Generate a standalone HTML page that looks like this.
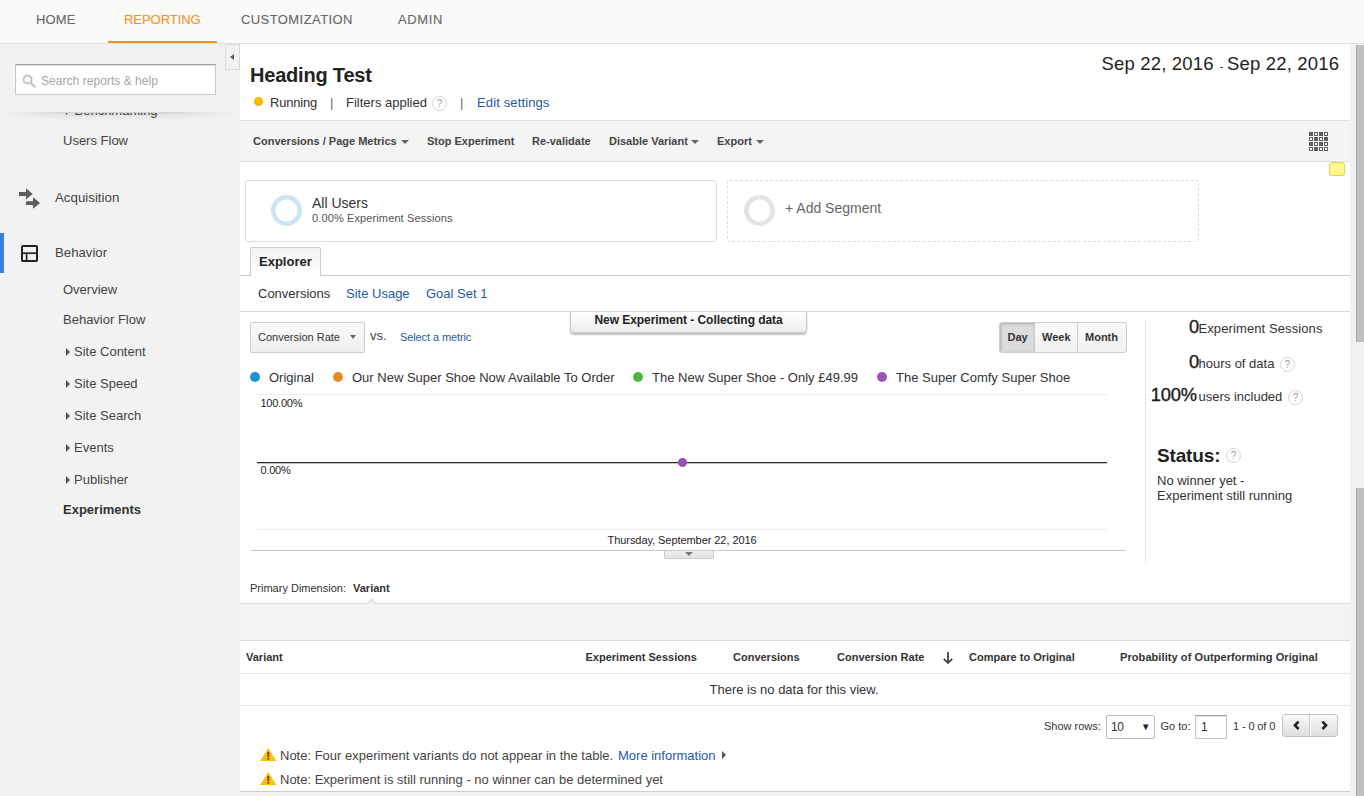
<!DOCTYPE html>
<html><head><meta charset="utf-8"><style>
*{box-sizing:border-box;margin:0;padding:0}
html,body{width:1364px;height:796px;overflow:hidden;background:#f2f2f2;font-family:"Liberation Sans",sans-serif;color:#333;position:relative}
.box{position:absolute}
.t{position:absolute;white-space:nowrap;line-height:1}
.tri-r{position:absolute;width:0;height:0;border-top:4px solid transparent;border-bottom:4px solid transparent;border-left:4px solid #555}
.dd{position:absolute;width:0;height:0;border-left:4px solid transparent;border-right:4px solid transparent;border-top:4px solid #666}
.q{position:absolute;width:15px;height:15px;border-radius:50%;border:1px solid #d4d4d4;color:#9a9a9a;font-size:10px;line-height:13px;text-align:center}
.q::after{content:"?"}
</style></head><body>
<div class="box" style="left:0;top:0;width:1364px;height:43px;background:#fafafa"></div>
<div class="box" style="left:0;top:43px;width:1364px;height:1px;background:#dedede"></div>
<div class="t" style="left:36px;top:12.5px;font-size:13px;font-weight:normal;color:#686868;letter-spacing:0.15px;-webkit-text-stroke:0.12px">HOME</div>

<div class="t" style="left:124px;top:12.5px;font-size:13px;font-weight:normal;color:#f7921e;letter-spacing:-0.05px;-webkit-text-stroke:0.12px">REPORTING</div>

<div class="t" style="left:241px;top:12.5px;font-size:13px;font-weight:normal;color:#686868;letter-spacing:0.42px;-webkit-text-stroke:0.12px">CUSTOMIZATION</div>

<div class="t" style="left:398px;top:12.5px;font-size:13px;font-weight:normal;color:#686868;letter-spacing:0.6px;-webkit-text-stroke:0.12px">ADMIN</div>

<div class="box" style="left:108px;top:41px;width:109px;height:2px;background:#f7921e"></div>
<div class="box" style="left:0;top:44px;width:240px;height:752px;background:#f2f2f2"></div>
<div class="t" style="left:74.5px;top:104.0px;font-size:13px;font-weight:normal;color:#444;">Benchmarking</div>

<div class="tri-r" style="left:66px;top:107px"></div>
<div class="box" style="left:0;top:44px;width:225px;height:69px;background:#f2f2f2"></div>
<div class="box" style="left:0;top:112px;width:236px;height:9px;background:linear-gradient(rgba(0,0,0,0.13),rgba(0,0,0,0.07) 25%,rgba(0,0,0,0.02) 70%,rgba(0,0,0,0));-webkit-mask-image:linear-gradient(90deg,transparent,#000 28%,#000 72%,transparent)"></div>
<div class="box" style="left:15px;top:64px;width:201px;height:31px;background:#fff;border:1px solid #c8c8c8;border-top-color:#a0a0a0;box-shadow:inset 0 1px 1px rgba(0,0,0,0.12)"></div>
<svg class="box" style="left:22px;top:74px" width="14" height="14" viewBox="0 0 14 14"><circle cx="5.5" cy="5.5" r="4" fill="none" stroke="#c4c4c4" stroke-width="2"/><line x1="8.5" y1="8.5" x2="12.5" y2="12.5" stroke="#c4c4c4" stroke-width="2.4" stroke-linecap="round"/></svg>
<div class="t" style="left:41px;top:74.8px;font-size:12.1px;font-weight:normal;color:#a6a6a6;">Search reports &amp; help</div>

<div class="box" style="left:225px;top:44px;width:15px;height:26px;background:#f2f2f2;border:1px solid #dadada"></div>
<div class="box" style="left:230px;top:54px;width:0;height:0;border-top:3.5px solid transparent;border-bottom:3.5px solid transparent;border-right:4.2px solid #5f5a60"></div>
<div class="t" style="left:63px;top:134.0px;font-size:13px;font-weight:normal;color:#444;">Users Flow</div>

<svg class="box" style="left:18px;top:186px" width="24" height="24" viewBox="0 0 24 24"><g fill="#5f5a60"><rect x="1" y="6" width="8" height="4"/><path d="M8 2.2L14.6 8 8 13.6z"/><rect x="8" y="15.2" width="8" height="3.8"/><path d="M15 11.2L22 17 15 22.8z"/></g></svg>
<div class="t" style="left:55px;top:190.7px;font-size:13.3px;font-weight:normal;color:#444;">Acquisition</div>

<div class="box" style="left:0;top:233px;width:4px;height:40px;background:#3b7ddd"></div>
<svg class="box" style="left:20px;top:244px" width="20" height="20" viewBox="0 0 20 20"><rect x="2" y="2" width="15" height="15" rx="0.8" fill="none" stroke="#222" stroke-width="2"/><path d="M3 9.2H16" stroke="#222" stroke-width="1.7"/><path d="M6.6 10V16" stroke="#222" stroke-width="1.7"/></svg>
<div class="t" style="left:55px;top:245.8px;font-size:13.2px;font-weight:normal;color:#444;">Behavior</div>

<div class="t" style="left:63px;top:282.8px;font-size:13px;font-weight:normal;color:#444;">Overview</div>

<div class="t" style="left:63px;top:312.8px;font-size:13px;font-weight:normal;color:#444;">Behavior Flow</div>

<div class="tri-r" style="left:66px;top:348px"></div>
<div class="t" style="left:74px;top:344.8px;font-size:13px;font-weight:normal;color:#444;">Site Content</div>

<div class="tri-r" style="left:66px;top:380px"></div>
<div class="t" style="left:74px;top:376.8px;font-size:13px;font-weight:normal;color:#444;">Site Speed</div>

<div class="tri-r" style="left:66px;top:412px"></div>
<div class="t" style="left:74px;top:408.8px;font-size:13px;font-weight:normal;color:#444;">Site Search</div>

<div class="tri-r" style="left:66px;top:444px"></div>
<div class="t" style="left:74px;top:440.8px;font-size:13px;font-weight:normal;color:#444;">Events</div>

<div class="tri-r" style="left:66px;top:476px"></div>
<div class="t" style="left:74px;top:472.8px;font-size:13px;font-weight:normal;color:#444;">Publisher</div>

<div class="t" style="left:63px;top:502.8px;font-size:13px;font-weight:bold;color:#333;">Experiments</div>

<div class="box" style="left:240px;top:44px;width:1110px;height:747px;background:#fff"></div>
<div class="box" style="left:240px;top:791px;width:1110px;height:1px;background:#cdcdcd"></div>
<div class="t" style="left:250px;top:65.1px;font-size:20px;font-weight:bold;color:#222;letter-spacing:-0.2px">Heading Test</div>

<div class="box" style="left:254px;top:97px;width:9px;height:9px;border-radius:50%;background:radial-gradient(circle at 50% 40%,#ffc800,#f0a000)"></div>
<div class="t" style="left:270px;top:96.0px;font-size:13px;font-weight:normal;color:#333;letter-spacing:-0.2px">Running</div>

<div class="t" style="left:330px;top:96.0px;font-size:13px;font-weight:normal;color:#666;">|</div>

<div class="t" style="left:346px;top:96.0px;font-size:13px;font-weight:normal;color:#333;">Filters applied</div>

<div class="q" style="left:432px;top:96px"></div>
<div class="t" style="left:460px;top:96.0px;font-size:13px;font-weight:normal;color:#666;">|</div>

<div class="t" style="left:477px;top:96.0px;font-size:13px;font-weight:normal;color:#1d5aa5;letter-spacing:0.13px">Edit settings</div>

<div class="t" style="left:1101.5px;top:55.3px;font-size:18.5px;font-weight:normal;color:#222;letter-spacing:0.18px">Sep 22, 2016</div>

<div class="box" style="left:1219.5px;top:66.6px;width:3px;height:1.2px;background:#444"></div>
<div class="t" style="left:1227px;top:55.3px;font-size:18.5px;font-weight:normal;color:#222;letter-spacing:0.18px">Sep 22, 2016</div>

<div class="box" style="left:240px;top:120px;width:1110px;height:42px;background:#f4f4f4;border-top:1px solid #e2e2e2;border-bottom:1px solid #e2e2e2"></div>
<div class="t" style="left:253px;top:135.7px;font-size:11px;font-weight:bold;color:#444;">Conversions / Page Metrics</div>

<div class="dd" style="left:400.5px;top:140px"></div>
<div class="t" style="left:427px;top:135.7px;font-size:11px;font-weight:bold;color:#444;">Stop Experiment</div>

<div class="t" style="left:532px;top:135.7px;font-size:11px;font-weight:bold;color:#444;">Re-validate</div>

<div class="t" style="left:609px;top:135.7px;font-size:11px;font-weight:bold;color:#444;">Disable Variant</div>

<div class="dd" style="left:691px;top:140px"></div>
<div class="t" style="left:717px;top:135.7px;font-size:11px;font-weight:bold;color:#444;">Export</div>

<div class="dd" style="left:756px;top:140px"></div>
<svg class="box" style="left:1309px;top:132px" width="20" height="20" viewBox="0 0 20 20"><rect x="0" y="0" width="4" height="4" fill="#5f5a60"/><rect x="5.5" y="0.5" width="3" height="3" fill="#fff" stroke="#5f5a60" stroke-width="1"/><rect x="10" y="0" width="4" height="4" fill="#5f5a60"/><rect x="15.5" y="0.5" width="3" height="3" fill="#fff" stroke="#5f5a60" stroke-width="1"/><rect x="0.5" y="5.5" width="3" height="3" fill="#fff" stroke="#5f5a60" stroke-width="1"/><rect x="5" y="5" width="4" height="4" fill="#5f5a60"/><rect x="10.5" y="5.5" width="3" height="3" fill="#fff" stroke="#5f5a60" stroke-width="1"/><rect x="15" y="5" width="4" height="4" fill="#5f5a60"/><rect x="0" y="10" width="4" height="4" fill="#5f5a60"/><rect x="5.5" y="10.5" width="3" height="3" fill="#fff" stroke="#5f5a60" stroke-width="1"/><rect x="10" y="10" width="4" height="4" fill="#5f5a60"/><rect x="15.5" y="10.5" width="3" height="3" fill="#fff" stroke="#5f5a60" stroke-width="1"/><rect x="0.5" y="15.5" width="3" height="3" fill="#fff" stroke="#5f5a60" stroke-width="1"/><rect x="5" y="15" width="4" height="4" fill="#5f5a60"/><rect x="10.5" y="15.5" width="3" height="3" fill="#fff" stroke="#5f5a60" stroke-width="1"/><rect x="15.5" y="15.5" width="3" height="3" fill="#fff" stroke="#5f5a60" stroke-width="1"/></svg>
<div class="box" style="left:1329px;top:162px;width:16px;height:14px;background:#fff88f;border:1px solid #e6d24a;border-radius:3px"></div>
<div class="box" style="left:245px;top:180px;width:472px;height:62px;border:1px solid #ddd;border-radius:3px"></div>
<svg class="box" style="left:270px;top:194px" width="33" height="33" viewBox="0 0 33 33"><circle cx="16.5" cy="16.5" r="13.2" fill="none" stroke="#cbe5f4" stroke-width="4.6" stroke-dasharray="81.9 1" transform="rotate(-88 16.5 16.5)"/></svg>
<div class="t" style="left:312px;top:196.1px;font-size:14px;font-weight:normal;color:#333;">All Users</div>

<div class="t" style="left:312px;top:212.7px;font-size:11px;font-weight:normal;color:#555;letter-spacing:0.12px">0.00% Experiment Sessions</div>

<div class="box" style="left:727px;top:180px;width:472px;height:62px;border:1px dashed #ddd;border-radius:3px"></div>
<svg class="box" style="left:743px;top:194px" width="33" height="33" viewBox="0 0 33 33"><circle cx="16.5" cy="16.5" r="13.2" fill="none" stroke="#e3e3e3" stroke-width="4.6" stroke-dasharray="81.9 1" transform="rotate(-88 16.5 16.5)"/></svg>
<div class="t" style="left:785px;top:201.1px;font-size:14px;font-weight:normal;color:#666;">+ Add Segment</div>

<div class="box" style="left:240px;top:275px;width:1110px;height:1px;background:#ccc"></div>
<div class="box" style="left:250px;top:247px;width:71px;height:29px;border:1px solid #ccc;border-bottom:none;border-radius:2px 2px 0 0;background:linear-gradient(#f2f2f2,#fff)"></div>
<div class="t" style="left:259px;top:255.0px;font-size:13px;font-weight:bold;color:#222;">Explorer</div>

<div class="t" style="left:258px;top:287.0px;font-size:13px;font-weight:normal;color:#333;">Conversions</div>

<div class="t" style="left:346px;top:287.0px;font-size:13px;font-weight:normal;color:#1d5aa5;">Site Usage</div>

<div class="t" style="left:426px;top:287.0px;font-size:13px;font-weight:normal;color:#1d5aa5;">Goal Set 1</div>

<div class="box" style="left:240px;top:311px;width:1110px;height:1px;background:#d8d8d8"></div>
<div class="box" style="left:250px;top:322px;width:115px;height:31px;border:1px solid #ccc;border-radius:2px;background:linear-gradient(#fafafa,#efefef)"></div>
<div class="t" style="left:258px;top:331.7px;font-size:11px;font-weight:normal;color:#333;">Conversion Rate</div>

<div class="dd" style="left:350px;top:335px;border-width:4px 3.5px 0 3.5px"></div>
<div class="t" style="left:370px;top:329.0px;font-size:13px;font-weight:normal;color:#444;">vs.</div>

<div class="t" style="left:400px;top:331.7px;font-size:11px;font-weight:normal;color:#1d5aa5;letter-spacing:-0.1px">Select a metric</div>

<div class="box" style="left:570px;top:312px;width:237px;height:20.5px;border:1px solid #c8c8c8;border-top:none;border-radius:0 0 4px 4px;background:linear-gradient(#fff,#ececec);box-shadow:0 2px 2px rgba(0,0,0,0.25)"></div>
<div class="t" style="left:594.5px;top:313.8px;font-size:12px;font-weight:bold;color:#222;letter-spacing:-0.06px">New Experiment - Collecting data</div>

<div class="box" style="left:999px;top:322px;width:128px;height:31px;border:1px solid #ccc;border-radius:3px;background:linear-gradient(#fafafa,#f0f0f0);overflow:hidden"><div class="box" style="left:0;top:0;width:34px;height:29px;background:#dcdcdc;box-shadow:inset 1px 1px 3px rgba(0,0,0,0.22)"></div><div class="box" style="left:34px;top:0;width:1px;height:29px;background:#ccc"></div><div class="box" style="left:77px;top:0;width:1px;height:29px;background:#ccc"></div></div>
<div class="t" style="left:1007.5px;top:331.7px;font-size:11px;font-weight:bold;color:#333;">Day</div>

<div class="t" style="left:1042px;top:331.7px;font-size:11px;font-weight:bold;color:#333;">Week</div>

<div class="t" style="left:1085px;top:331.7px;font-size:11px;font-weight:bold;color:#333;">Month</div>

<div class="box" style="left:250px;top:372px;width:10px;height:10px;border-radius:50%;background:#1e90d6"></div>
<div class="t" style="left:269px;top:371.0px;font-size:13px;font-weight:normal;color:#333;">Original</div>

<div class="box" style="left:333px;top:372px;width:10px;height:10px;border-radius:50%;background:#df8c22"></div>
<div class="t" style="left:352px;top:371.0px;font-size:13px;font-weight:normal;color:#333;">Our New Super Shoe Now Available To Order</div>

<div class="box" style="left:633px;top:372px;width:10px;height:10px;border-radius:50%;background:#4db53e"></div>
<div class="t" style="left:652px;top:371.0px;font-size:13px;font-weight:normal;color:#333;">The New Super Shoe - Only £49.99</div>

<div class="box" style="left:877px;top:372px;width:10px;height:10px;border-radius:50%;background:#a152b8"></div>
<div class="t" style="left:896px;top:371.0px;font-size:13px;font-weight:normal;color:#333;">The Super Comfy Super Shoe</div>

<div class="box" style="left:257px;top:394px;width:850px;height:1px;background:#ececec"></div>
<div class="t" style="left:260.5px;top:397.7px;font-size:11px;font-weight:normal;color:#222;letter-spacing:-0.25px">100.00%</div>

<div class="box" style="left:257px;top:462px;width:850px;height:1px;background:#2a2a2a;box-shadow:0 0.6px 0 rgba(40,40,40,0.45)"></div>
<div class="t" style="left:260.5px;top:464.7px;font-size:11px;font-weight:normal;color:#222;letter-spacing:-0.25px">0.00%</div>

<div class="box" style="left:677.5px;top:457.5px;width:9px;height:9px;border-radius:50%;background:#9b50b5"></div>
<div class="box" style="left:257px;top:529px;width:850px;height:1px;background:#ececec"></div>
<div class="t" style="left:607.5px;top:534.7px;font-size:11px;font-weight:normal;color:#222;letter-spacing:-0.06px">Thursday, September 22, 2016</div>

<div class="box" style="left:251px;top:550px;width:875px;height:1px;background:#c8c8c8"></div>
<div class="box" style="left:664px;top:551px;width:50px;height:8px;border:1px solid #ccc;border-top:none;border-radius:0 0 2px 2px;background:linear-gradient(#eee,#e2e2e2)"></div>
<div class="box" style="left:685px;top:552px;width:0;height:0;border-left:4px solid transparent;border-right:4px solid transparent;border-top:4px solid #777"></div>
<div class="box" style="left:1145px;top:321px;width:0;height:241px;border-left:1px dotted #ccc"></div>
<div class="t" style="left:1189px;top:318.0px;font-size:18.3px;font-weight:normal;color:#1a1a1a;-webkit-text-stroke:0.35px">0</div>

<div class="t" style="left:1198.5px;top:322.0px;font-size:13px;font-weight:normal;color:#333;letter-spacing:0.1px">Experiment Sessions</div>

<div class="t" style="left:1189px;top:352.5px;font-size:18.3px;font-weight:normal;color:#1a1a1a;-webkit-text-stroke:0.35px">0</div>

<div class="t" style="left:1198.5px;top:357.0px;font-size:13px;font-weight:normal;color:#333;">hours of data</div>

<div class="q" style="left:1280px;top:357px"></div>
<div class="t" style="left:1150.8px;top:385.5px;font-size:18.3px;font-weight:normal;color:#1a1a1a;-webkit-text-stroke:0.35px;letter-spacing:-0.2px">100%</div>

<div class="t" style="left:1198.5px;top:390.0px;font-size:13px;font-weight:normal;color:#333;">users included</div>

<div class="q" style="left:1288px;top:390px"></div>
<div class="t" style="left:1157px;top:445.9px;font-size:19px;font-weight:bold;color:#222;letter-spacing:-0.15px">Status:</div>

<div class="q" style="left:1226px;top:448px"></div>
<div class="t" style="left:1157px;top:474.0px;font-size:13px;font-weight:normal;color:#333;">No winner yet -</div>

<div class="t" style="left:1157px;top:489.0px;font-size:13px;font-weight:normal;color:#333;">Experiment still running</div>

<div class="t" style="left:250px;top:582.7px;font-size:11px;font-weight:normal;color:#333;">Primary Dimension:</div>

<div class="t" style="left:353px;top:582.7px;font-size:11px;font-weight:bold;color:#333;">Variant</div>

<div class="box" style="left:240px;top:603px;width:1110px;height:38px;background:#f3f3f3;border-top:1px solid #ddd;border-bottom:1px solid #ddd"></div>
<div class="box" style="left:368px;top:599.5px;width:7px;height:7px;background:#f3f3f3;border-left:1px solid #d4d4d4;border-top:1px solid #d4d4d4;transform:rotate(45deg)"></div>
<div class="t" style="left:246px;top:651.7px;font-size:11px;font-weight:bold;color:#333;">Variant</div>

<div class="t" style="left:585.5px;top:651.7px;font-size:11px;font-weight:bold;color:#333;">Experiment Sessions</div>

<div class="t" style="left:733px;top:651.7px;font-size:11px;font-weight:bold;color:#333;">Conversions</div>

<div class="t" style="left:837px;top:651.7px;font-size:11px;font-weight:bold;color:#333;">Conversion Rate</div>

<svg class="box" style="left:942px;top:651px" width="12" height="14" viewBox="0 0 12 14"><path d="M6 1v11M1.8 7.8L6 12l4.2-4.2" stroke="#444" stroke-width="1.8" fill="none"/></svg>
<div class="t" style="left:969px;top:651.7px;font-size:11px;font-weight:bold;color:#333;">Compare to Original</div>

<div class="t" style="left:1120px;top:651.7px;font-size:11px;font-weight:bold;color:#333;letter-spacing:0.08px">Probability of Outperforming Original</div>

<div class="box" style="left:240px;top:673px;width:1110px;height:1px;background:#e2e2e2"></div>
<div class="t" style="left:709.5px;top:682.5px;font-size:13px;font-weight:normal;color:#333;">There is no data for this view.</div>

<div class="box" style="left:240px;top:705px;width:1110px;height:1px;background:#e2e2e2"></div>
<div class="t" style="left:1044px;top:720.7px;font-size:11px;font-weight:normal;color:#333;">Show rows:</div>

<div class="box" style="left:1106px;top:715px;width:49px;height:24px;border:1px solid #bbb;border-radius:2px;background:#fff"></div>
<div class="t" style="left:1111px;top:720.8px;font-size:12px;font-weight:normal;color:#333;letter-spacing:-0.4px">10</div>

<div class="t" style="left:1141px;top:721.5px;font-size:9.5px;font-weight:normal;color:#222;">&#9660;</div>

<div class="t" style="left:1160.5px;top:720.7px;font-size:11px;font-weight:normal;color:#333;">Go to:</div>

<div class="box" style="left:1195px;top:715px;width:32px;height:24px;border:1px solid #c4c4c4;border-top-color:#a0a0a0;background:#fff;box-shadow:inset 0 1px 1px rgba(0,0,0,0.1)"></div>
<div class="t" style="left:1201px;top:720.8px;font-size:12px;font-weight:normal;color:#333;letter-spacing:-0.3px">1</div>

<div class="t" style="left:1233px;top:720.7px;font-size:11px;font-weight:normal;color:#333;letter-spacing:-0.12px">1 - 0 of 0</div>

<div class="box" style="left:1282px;top:714px;width:56px;height:23px;border:1px solid #c4c4c4;border-radius:3px;background:linear-gradient(#fbfbfb,#e9e9e9 55%,#dedede)"></div>
<div class="box" style="left:1309px;top:715px;width:1px;height:21px;background:#c8c8c8;box-shadow:1px 0 0 #fff"></div>
<svg class="box" style="left:1291px;top:719px" width="40" height="13" viewBox="0 0 40 13"><path d="M7.6 2.6L3.9 6.3 7.6 10" stroke="#1e1e1e" stroke-width="2.5" fill="none"/><path d="M31.4 2.6l3.7 3.7-3.7 3.7" stroke="#1e1e1e" stroke-width="2.5" fill="none"/></svg>
<svg class="box" style="left:260px;top:748px" width="17" height="14" viewBox="0 0 17 14"><path d="M8.3 0.3L16.5 13 0 13z" fill="#f7c10e"/><rect x="7.4" y="3.8" width="1.8" height="5.4" fill="#7a3d1a"/><rect x="7.4" y="10" width="1.8" height="1.7" fill="#7a3d1a"/></svg>
<div class="t" style="left:280px;top:749.0px;font-size:13px;font-weight:normal;color:#444;">Note: Four experiment variants do not appear in the table.</div>

<div class="t" style="left:618px;top:749.0px;font-size:13px;font-weight:normal;color:#1d5aa5;">More information</div>

<div class="tri-r" style="left:722px;top:751px"></div>
<svg class="box" style="left:260px;top:772px" width="17" height="14" viewBox="0 0 17 14"><path d="M8.3 0.3L16.5 13 0 13z" fill="#f7c10e"/><rect x="7.4" y="3.8" width="1.8" height="5.4" fill="#7a3d1a"/><rect x="7.4" y="10" width="1.8" height="1.7" fill="#7a3d1a"/></svg>
<div class="t" style="left:280px;top:773.0px;font-size:13px;font-weight:normal;color:#444;">Note: Experiment is still running - no winner can be determined yet</div>

<div class="box" style="left:1350px;top:44px;width:14px;height:752px;background:#f1f1f1"></div>
<div class="box" style="left:1356px;top:45px;width:8px;height:297px;background:#c1c1c1;border-left:1px solid #a9a9a9"></div>
<div class="box" style="left:1356px;top:488px;width:8px;height:308px;background:#c1c1c1;border-left:1px solid #a9a9a9"></div>
</body></html>
